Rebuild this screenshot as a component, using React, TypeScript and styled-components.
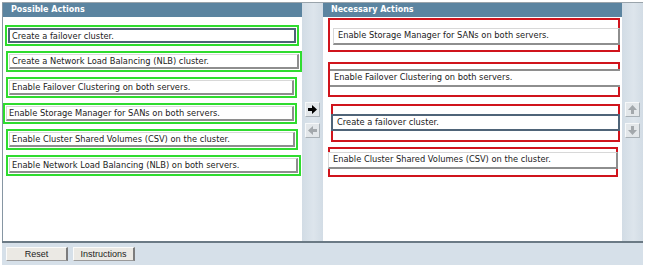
import * as React from 'react';
import styled, { createGlobalStyle } from 'styled-components';

const GlobalStyle = createGlobalStyle`
  html, body {
    margin: 0;
    padding: 0;
    background: #fff;
  }
  body {
    font-family: "DejaVu Sans", Verdana, sans-serif;
  }
`;

const Frame = styled.div`
  width: 641px;
  margin: 2px 0 0 2px;
  border-top: 1px solid #9aa4ab;
  display: flex;
  flex-direction: column;
`;

const Main = styled.div`
  display: grid;
  grid-template-columns: 300px 21px 299px 21px;
  height: 238px;
  border-bottom: 2px solid #6b7a85;
`;

const Panel = styled.div<{ edge?: boolean }>`
  display: flex;
  flex-direction: column;
  background: #fff;
  border-left: ${(p) => (p.edge ? '1px solid #8696a3' : 'none')};
`;

const PanelHead = styled.div`
  height: 14px;
  line-height: 14px;
  background: #5b84a0;
  color: #fff;
  font-size: 8px;
  font-weight: bold;
  padding-left: 8px;
  white-space: nowrap;
`;

const PanelBody = styled.div<{ top: number }>`
  display: flex;
  flex-direction: column;
  padding-top: ${(p) => p.top}px;
`;

const Gutter = styled.div`
  background: linear-gradient(90deg, #d2dce5 0%, #dde5ec 55%, #d2dce5 100%);
  display: flex;
  flex-direction: column;
  align-items: center;
  padding-top: 99px;
  gap: 6px;
`;

const ArrowButton = styled.div<{ active?: boolean }>`
  width: 13px;
  height: 13px;
  background: #e3e7ea;
  border-top: 1px solid #f6f8f9;
  border-left: 1px solid #f6f8f9;
  border-right: 1px solid #a9b1b7;
  border-bottom: 1px solid #a9b1b7;
  display: flex;
  align-items: center;
  justify-content: center;
  color: ${(p) => (p.active ? '#000' : '#a3a8ac')};
`;

const GreenBox = styled.div<{ shift: number; wide: number }>`
  height: 21px;
  box-sizing: border-box;
  margin: 0 0 5px ${(p) => p.shift}px;
  width: ${(p) => p.wide}px;
  border: 2px solid #2fdc2f;
  display: flex;
`;

const RedBox = styled.div<{ top: number; h: number; pad: number; shift: number; wide: number }>`
  box-sizing: border-box;
  height: ${(p) => p.h}px;
  width: ${(p) => p.wide}px;
  margin: ${(p) => p.top}px 0 0 ${(p) => p.shift}px;
  padding-top: ${(p) => p.pad}px;
  border: 2px solid #d0141c;
  display: flex;
  flex-direction: column;
`;

const Item = styled.div<{ selected?: boolean; flat?: boolean; inset?: number }>`
  flex: 0 0 auto;
  box-sizing: border-box;
  height: ${(p) => (p.flat ? 18 : 17)}px;
  margin-left: ${(p) => p.inset ?? 0}px;
  margin-right: -2px;
  background: #fff;
  font-size: 8.3px;
  color: #222;
  line-height: 13px;
  padding-left: 4px;
  white-space: nowrap;
  overflow: hidden;
  border-top: ${(p) => (p.selected ? '2px solid #4f6478' : p.flat ? '2px solid #8e8e8e' : '1px solid #d8d8d8')};
  border-left: ${(p) => (p.selected ? '2px solid #4f6478' : p.flat ? 'none' : '1px solid #d8d8d8')};
  border-right: ${(p) => (p.selected ? '2px solid #4f6478' : p.flat ? 'none' : '2px solid #8e8e8e')};
  border-bottom: ${(p) => (p.selected ? '2px solid #4f6478' : '2px solid #8e8e8e')};
`;

const LeftItem = styled(Item)`
  flex: 1;
  height: auto;
  margin: 1px;
  padding-left: 2px;
`;

const Footer = styled.div`
  height: 22px;
  background: #d6e0e9;
  display: flex;
  align-items: center;
  gap: 5px;
  padding-left: 4px;
`;

const FooterButton = styled.div<{ wide: number }>`
  width: ${(p) => p.wide}px;
  height: 14px;
  box-sizing: border-box;
  background: #ebe9e4;
  border-top: 1px solid #fbfbfa;
  border-left: 1px solid #fbfbfa;
  border-right: 2px solid #7c7c7c;
  border-bottom: 1px solid #9a9a9a;
  font-family: "Liberation Sans", Arial, sans-serif;
  font-size: 9px;
  line-height: 12px;
  text-align: center;
  color: #222;
`;

const Arrow = ({ dir }: { dir: 'right' | 'left' | 'up' | 'down' }) => {
  const rot = { right: 0, left: 180, up: 270, down: 90 }[dir];
  return (
    <svg width="11" height="11" viewBox="0 0 11 11">
      <polygon
        points="1,4 5,4 5,1 10,5.5 5,10 5,7 1,7"
        fill="currentColor"
        transform={`rotate(${rot} 5.5 5.5)`}
      />
    </svg>
  );
};

const possible = [
  { text: 'Create a failover cluster.', shift: 2, wide: 294, selected: true },
  { text: 'Create a Network Load Balancing (NLB) cluster.', shift: 3, wide: 296 },
  { text: 'Enable Failover Clustering on both servers.', shift: 3, wide: 291 },
  { text: 'Enable Storage Manager for SANs on both servers.', shift: 0, wide: 294 },
  { text: 'Enable Cluster Shared Volumes (CSV) on the cluster.', shift: 3, wide: 292 },
  { text: 'Enable Network Load Balancing (NLB) on both servers.', shift: 3, wide: 295 },
];

const necessary = [
  { text: 'Enable Storage Manager for SANs on both servers.', top: 1, h: 34, pad: 8, shift: 5, wide: 292, inset: 3 },
  { text: 'Enable Failover Clustering on both servers.', top: 10, h: 35, pad: 5, shift: 5, wide: 292, inset: 0, flat: true },
  { text: 'Create a failover cluster.', top: 7, h: 38, pad: 8, shift: 8, wide: 289, inset: -2, selected: true },
  { text: 'Enable Cluster Shared Volumes (CSV) on the cluster.', top: 5, h: 30, pad: 3, shift: 5, wide: 290, inset: -2 },
];

export default function App() {
  return (
    <>
      <GlobalStyle />
      <Frame>
        <Main>
          <Panel edge>
            <PanelHead>Possible Actions</PanelHead>
            <PanelBody top={8}>
              {possible.map((a) => (
                <GreenBox key={a.text} shift={a.shift} wide={a.wide}>
                  <LeftItem selected={a.selected}>{a.text}</LeftItem>
                </GreenBox>
              ))}
            </PanelBody>
          </Panel>
          <Gutter>
            <ArrowButton active>
              <Arrow dir="right" />
            </ArrowButton>
            <ArrowButton>
              <Arrow dir="left" />
            </ArrowButton>
          </Gutter>
          <Panel>
            <PanelHead>Necessary Actions</PanelHead>
            <PanelBody top={0}>
              {necessary.map((a) => (
                <RedBox key={a.text} top={a.top} h={a.h} pad={a.pad} shift={a.shift} wide={a.wide}>
                  <Item selected={a.selected} flat={a.flat} inset={a.inset}>
                    {a.text}
                  </Item>
                </RedBox>
              ))}
            </PanelBody>
          </Panel>
          <Gutter>
            <ArrowButton>
              <Arrow dir="up" />
            </ArrowButton>
            <ArrowButton>
              <Arrow dir="down" />
            </ArrowButton>
          </Gutter>
        </Main>
        <Footer>
          <FooterButton wide={62}>Reset</FooterButton>
          <FooterButton wide={62}>Instructions</FooterButton>
        </Footer>
      </Frame>
    </>
  );
}
